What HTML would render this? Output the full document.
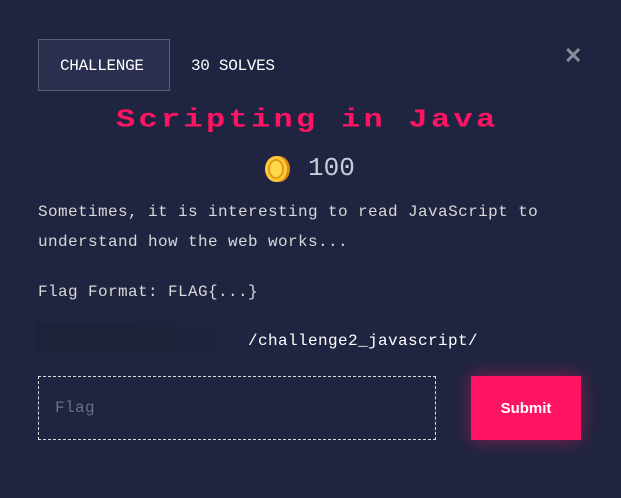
<!DOCTYPE html>
<html><head><style>
body{margin:0;width:621px;height:498px;background:#1f2540;font-family:"Liberation Mono",monospace;color:#d8d8d8;position:relative;overflow:hidden}
.a{position:absolute;white-space:nowrap}
.t{font-size:16px;letter-spacing:.4px}
</style></head><body>
<div class="a" style="left:38px;top:39px;width:130px;height:50px;background:#2b2f4f;border:1px solid #5a5d6e"></div>
<div class="a t" style="left:60px;top:57px;color:#fff;letter-spacing:-.3px">CHALLENGE</div>
<div class="a t" style="left:191px;top:57px;color:#fff;letter-spacing:-.3px">30 SOLVES</div>
<div class="a" style="left:564px;top:43px;color:#8a8d99;font-size:22px;font-weight:bold;font-family:'Liberation Sans',sans-serif">✕</div>
<div class="a" style="left:116px;top:101px;color:#ff1463;font-size:32px;font-weight:bold;letter-spacing:3.3px;transform:scaleY(.8);transform-origin:0 50%">Scripting in Java</div>
<svg class="a" style="left:262px;top:154px" width="30" height="30" viewBox="0 0 30 30"><ellipse cx="17" cy="15" rx="11" ry="13" fill="#d98a10"/><ellipse cx="14" cy="15" rx="11" ry="13" fill="#ffc93a"/><ellipse cx="14" cy="15" rx="7" ry="9" fill="#ffd84d" stroke="#e09a18" stroke-width="2"/></svg>
<div class="a" style="left:308px;top:153px;font-size:26px;color:#c8ccd8">100</div>
<div class="a t" style="left:38px;top:203px">Sometimes, it is interesting to read JavaScript to</div>
<div class="a t" style="left:38px;top:233px">understand how the web works...</div>
<div class="a t" style="left:38px;top:283px">Flag Format: FLAG{...}</div>
<div class="a" style="left:36px;top:322px;width:210px;height:30px;background:linear-gradient(90deg,#1c2138,#1d2239,#1f2540);opacity:.8"></div>
<div class="a t" style="left:248px;top:332px;color:#fff">/challenge2_javascript/</div>
<div class="a" style="left:38px;top:376px;width:396px;height:62px;border:1px dashed #ddd"></div>
<div class="a t" style="left:55px;top:399px;color:#6a7080">Flag</div>
<div class="a" style="left:471px;top:376px;width:110px;height:64px;background:#ff1463;box-shadow:0 0 18px rgba(255,20,99,.45);color:#fff;font-weight:bold;font-size:15px;text-align:center;line-height:66px;font-family:'Liberation Sans',sans-serif">Submit</div>
</body></html>
